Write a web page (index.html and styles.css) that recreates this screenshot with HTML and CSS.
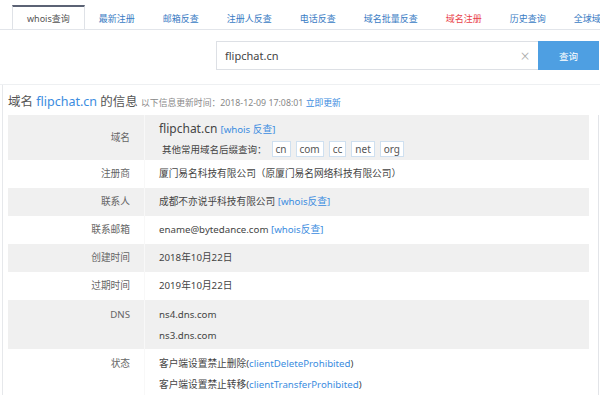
FILE: index.html
```html
<!DOCTYPE html>
<html lang="zh-CN">

<head>
    <meta charset="UTF-8">
    <meta name="viewport" content="width=device-width, initial-scale=1.0">
    <title>whois查询</title>
    <link rel="stylesheet" href="styles.css">
</head>

<body>
    <nav class="tabs">
        <a class="tab active">whois查询</a>
        <a class="tab">最新注册</a>
        <a class="tab">邮箱反查</a>
        <a class="tab">注册人反查</a>
        <a class="tab">电话反查</a>
        <a class="tab">域名批量反查</a>
        <a class="tab hot">域名注册</a>
        <a class="tab">历史查询</a>
        <a class="tab">全球域名</a>
    </nav>

    <div class="search">
        <div class="search-box">
            <input type="text" value="flipchat.cn">
            <span class="clear">&times;</span>
        </div>
        <button class="search-btn">查询</button>
    </div>

    <div class="main">
        <h2 class="info-title">
            域名 <a class="link">flipchat.cn</a> 的信息
            <span class="update">以下信息更新时间：2018-12-09 17:08:01 <a class="link">立即更新</a></span>
        </h2>

        <div class="layout">
            <div class="info">
                <div class="row gray tall">
                    <div class="label">域名</div>
                    <div class="value">
                        <div class="domain">flipchat.cn <a class="link small">[whois 反查]</a></div>
                        <div class="suffixes">
                            其他常用域名后缀查询：
                            <span class="suffix">cn</span>
                            <span class="suffix">com</span>
                            <span class="suffix">cc</span>
                            <span class="suffix">net</span>
                            <span class="suffix">org</span>
                        </div>
                    </div>
                </div>
                <div class="row">
                    <div class="label">注册商</div>
                    <div class="value">厦门易名科技有限公司（原厦门易名网络科技有限公司）</div>
                </div>
                <div class="row gray">
                    <div class="label">联系人</div>
                    <div class="value">成都不亦说乎科技有限公司 <a class="link">[whois反查]</a></div>
                </div>
                <div class="row">
                    <div class="label">联系邮箱</div>
                    <div class="value">ename@bytedance.com <a class="link">[whois反查]</a></div>
                </div>
                <div class="row gray">
                    <div class="label">创建时间</div>
                    <div class="value">2018年10月22日</div>
                </div>
                <div class="row">
                    <div class="label">过期时间</div>
                    <div class="value">2019年10月22日</div>
                </div>
                <div class="row gray multi">
                    <div class="label">DNS</div>
                    <div class="value">
                        <div>ns4.dns.com</div>
                        <div>ns3.dns.com</div>
                    </div>
                </div>
                <div class="row multi">
                    <div class="label">状态</div>
                    <div class="value">
                        <div>客户端设置禁止删除(<a class="link">clientDeleteProhibited</a>)</div>
                        <div>客户端设置禁止转移(<a class="link">clientTransferProhibited</a>)</div>
                    </div>
                </div>
            </div>
            <div class="side"></div>
        </div>
    </div>
</body>

</html>
```

FILE: styles.css
```css
* {
    margin: 0;
    padding: 0;
    box-sizing: border-box;
}

body {
    font-family: "Noto Sans", "Noto Sans CJK SC", sans-serif;
    font-size: 9.7px;
    color: #444;
    background: #fff;
    overflow: hidden;
}

.link {
    color: #3b8ce0;
    text-decoration: none;
}

/* top tab bar */
.tabs {
    display: flex;
    height: 30px;
    padding: 5px 0 0 12px;
    border-bottom: 1px solid #e2e5ea;
    white-space: nowrap;
    overflow: hidden;
}

.tab {
    padding: 0 13px;
    line-height: 24px;
    font-size: 9px;
    color: #3a7cc4;
    border: 1px solid transparent;
    border-top-width: 2px;
}

.tab.active {
    padding: 0 14px;
    color: #555;
    background: #fff;
    border-color: #dfe2e7;
    border-top-color: #5b6274;
    border-bottom: none;
    height: 25px;
}

.tab.hot {
    color: #e9424a;
}

/* search */
.search {
    display: flex;
    justify-content: flex-end;
    padding: 11px 1px 14px 0;
    border-bottom: 1px solid #eef0f2;
}

.search-box {
    display: flex;
    align-items: center;
    width: 322px;
    height: 29px;
    border: 1px solid #dde0e5;
    border-right: none;
}

.search-box input {
    flex: 1;
    border: none;
    outline: none;
    padding-left: 8px;
    font-family: inherit;
    font-size: 11px;
    color: #444;
    background: transparent;
}

.clear {
    width: 26px;
    font-size: 16px;
    font-weight: 300;
    color: #aaa;
    text-align: center;
}

.search-btn {
    width: 61px;
    height: 29px;
    border: none;
    background: #4e9fe2;
    color: #fff;
    font-family: inherit;
    font-size: 9.5px;
}

/* main content */
.main {
    margin-left: 2px;
    border-left: 1px solid #e6e8eb;
    padding-left: 5px;
}

.info-title {
    height: 30px;
    padding-top: 8px;
    font-size: 12.5px;
    font-weight: normal;
    color: #555;
    line-height: 18px;
}

.update {
    font-size: 8.8px;
    color: #888;
}

.layout {
    display: flex;
}

.info {
    width: 581px;
}

.side {
    margin-left: 9px;
    border-left: 1px solid #e2e4e8;
}

.row {
    display: grid;
    grid-template-columns: 137px 1fr;
    min-height: 28px;
}

.row.gray {
    background: #f0f0f0;
}

.row.tall {
    height: 45px;
}

.row.multi {
    height: 49px;
}

.label {
    padding-right: 14px;
    text-align: right;
    color: #666;
    line-height: 28px;
    border-right: 1px solid #f8f8f8;
}

.tall .label {
    line-height: 45px;
}

.multi .label {
    line-height: 26px;
    padding-top: 2px;
}

.value {
    padding-left: 14px;
    line-height: 28px;
    color: #444;
}

.multi .value {
    padding-top: 2px;
    line-height: 21px;
}

.multi .value div:first-child {
    margin-top: 2px;
}

.tall .value {
    padding-top: 5px;
    line-height: 18px;
}

.domain {
    font-size: 12px;
    color: #444;
}

.domain .small {
    font-size: 9.7px;
}

.suffixes {
    display: flex;
    align-items: center;
    gap: 5px;
    padding-left: 3px;
    margin-top: 2px;
    font-size: 9.5px;
    line-height: 15px;
}

.suffix {
    border: 1px solid #cfe0f0;
    background: #fff;
    padding: 0 3px;
    height: 16px;
    line-height: 14px;
    font-size: 10px;
    color: #555;
}
```
